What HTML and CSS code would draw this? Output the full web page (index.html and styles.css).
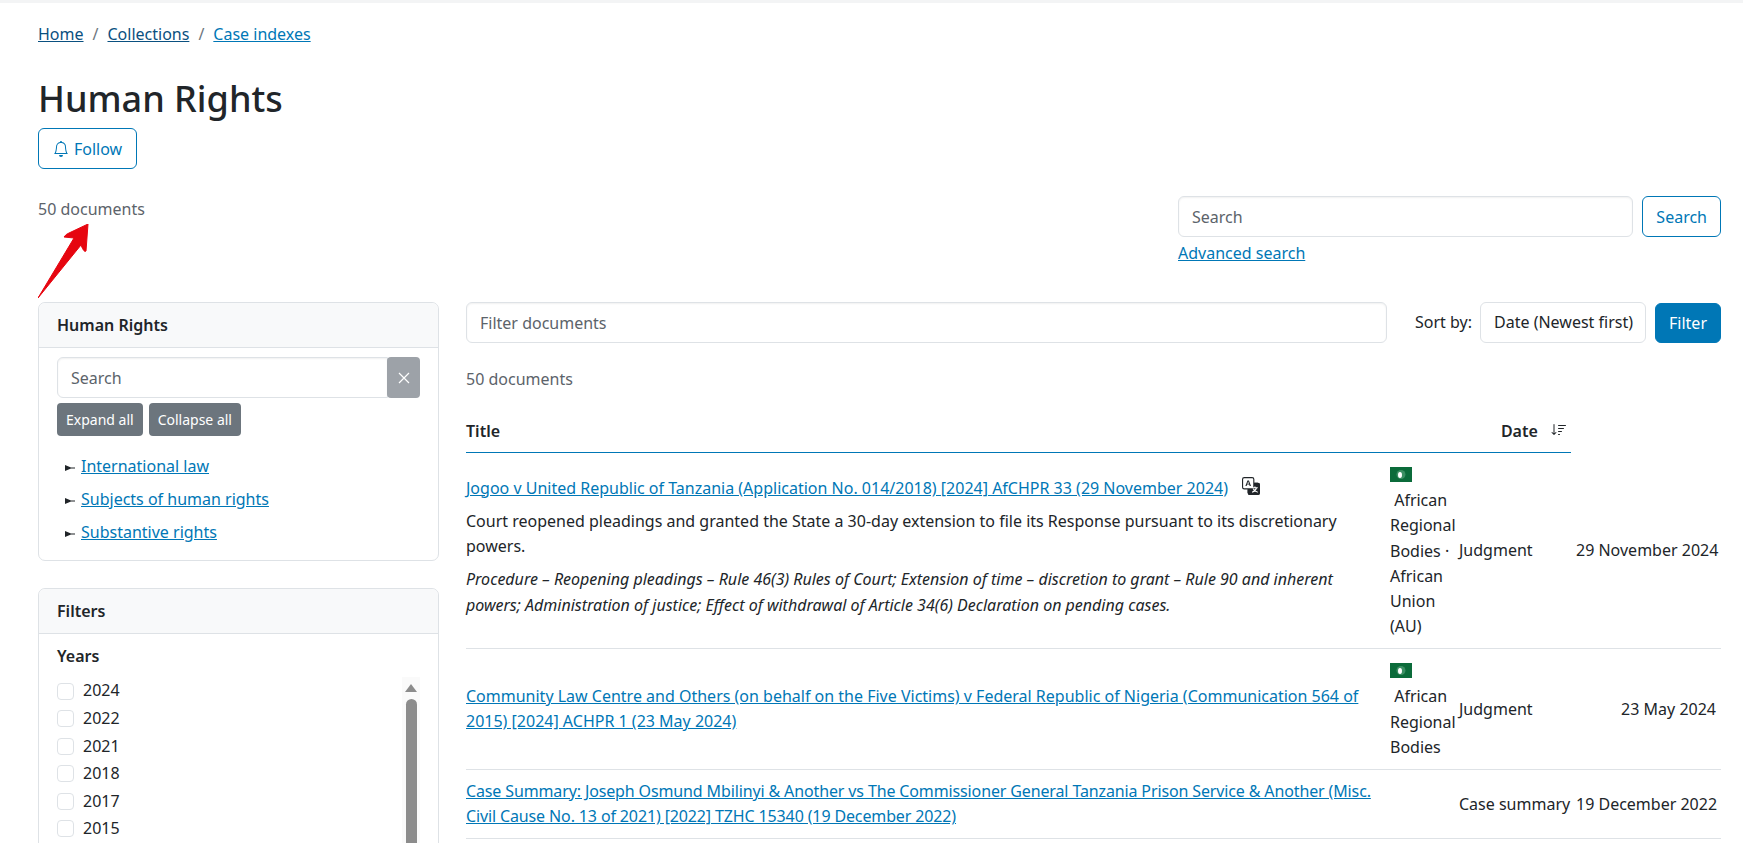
FILE: index.html
```html
<!DOCTYPE html>
<html lang="en">
<head>
    <meta charset="UTF-8">
    <title>Human Rights</title>
    <link rel="stylesheet" href="styles.css">
</head>
<body>
    <div class="top-shadow"></div>

    <main class="page">
        <!-- Breadcrumbs -->
        <nav class="crumbs">
            <a class="seen" href="#">Home</a><span class="sep">/</span><a class="seen" href="#">Collections</a><span class="sep">/</span><a href="#">Case indexes</a>
        </nav>

        <h1>Human Rights</h1>
        <button class="btn btn-outline follow">
            <svg class="bell" viewBox="0 0 16 16" fill="currentColor"><path d="M8 16a2 2 0 0 0 2-2H6a2 2 0 0 0 2 2M8 1.918l-.797.161A4 4 0 0 0 4 6c0 .628-.134 2.197-.459 3.742-.16.767-.376 1.566-.663 2.258h10.244c-.287-.692-.502-1.49-.663-2.258C12.134 8.197 12 6.628 12 6a4 4 0 0 0-3.203-3.92zM14.22 12c.223.447.481.801.78 1H1c.299-.199.557-.553.78-1C2.68 10.2 3 6.88 3 6c0-2.42 1.72-4.44 4.005-4.901a1 1 0 1 1 1.99 0A5 5 0 0 1 13 6c0 .88.32 4.2 1.22 6"/></svg>
            Follow
        </button>

        <!-- Count and site search -->
        <div class="count-row">
            <div class="count">50 documents</div>
            <div class="site-search">
                <div class="site-search-line">
                    <input class="field" type="text" placeholder="Search">
                    <button class="btn btn-outline">Search</button>
                </div>
                <a href="#">Advanced search</a>
            </div>
            <svg class="arrow" viewBox="0 0 52 76"><path d="M0 74 L36 14 L26 13 Q28 10 31 9 L50 0 L48 27 Q46 29 43 21 Z" fill="#e60610" stroke="#e60610" stroke-linejoin="round"/></svg>
        </div>

        <div class="columns">
            <!-- Sidebar -->
            <aside class="sidebar">
                <section class="card">
                    <div class="card-head">Human Rights</div>
                    <div class="card-body tree">
                        <div class="tree-search">
                            <input class="field" type="text" placeholder="Search">
                            <button class="clear">
                                <svg viewBox="0 0 16 16" width="16" height="16" stroke="#fff" stroke-width="1.2"><path d="M3 3 13 13M13 3 3 13"/></svg>
                            </button>
                        </div>
                        <div class="tree-btns">
                            <button class="btn-grey">Expand all</button>
                            <button class="btn-grey">Collapse all</button>
                        </div>
                        <ul class="tree-list">
                            <li><svg class="pointer" viewBox="0 0 10 6"><path d="M0 0 6 2.400H10V3.600H6L0 6Z" fill="#212529"/></svg><a href="#">International law</a></li>
                            <li><svg class="pointer" viewBox="0 0 10 6"><path d="M0 0 6 2.400H10V3.600H6L0 6Z" fill="#212529"/></svg><a href="#">Subjects of human rights</a></li>
                            <li><svg class="pointer" viewBox="0 0 10 6"><path d="M0 0 6 2.400H10V3.600H6L0 6Z" fill="#212529"/></svg><a href="#">Substantive rights</a></li>
                        </ul>
                    </div>
                </section>

                <section class="card">
                    <div class="card-head">Filters</div>
                    <div class="card-body filters">
                        <div class="filter-title">Years</div>
                        <div class="years">
                            <div class="year-list">
                                <label><input type="checkbox"> 2024</label>
                                <label><input type="checkbox"> 2022</label>
                                <label><input type="checkbox"> 2021</label>
                                <label><input type="checkbox"> 2018</label>
                                <label><input type="checkbox"> 2017</label>
                                <label><input type="checkbox"> 2015</label>
                            </div>
                            <div class="scroll">
                                <span class="scroll-up"></span>
                                <span class="scroll-thumb"></span>
                            </div>
                        </div>
                    </div>
                </section>
            </aside>

            <!-- Documents -->
            <section class="docs">
                <div class="filter-bar">
                    <input class="field grow" type="text" placeholder="Filter documents">
                    <span class="sort-label">Sort by:</span>
                    <div class="field select">Date (Newest first)</div>
                    <button class="btn btn-solid">Filter</button>
                </div>
                <div class="count docs-count">50 documents</div>

                <table class="doc-table">
                    <colgroup>
                        <col class="col-title"><col class="col-court"><col class="col-type"><col class="col-date">
                    </colgroup>
                    <thead>
                        <tr>
                            <th>Title</th>
                            <th colspan="2" class="th-date">Date
                                <svg class="sort" viewBox="0 0 16 16" fill="currentColor"><path d="M3.5 2.5a.5.5 0 0 0-1 0v8.793l-1.146-1.147a.5.5 0 0 0-.708.708l2 1.999.007.007a.497.497 0 0 0 .7-.006l2-2a.5.5 0 0 0-.707-.708L3.5 11.293zm3.5 1a.5.5 0 0 1 .5-.5h7a.5.5 0 0 1 0 1h-7a.5.5 0 0 1-.5-.5M7.5 6a.5.5 0 0 0 0 1h5a.5.5 0 0 0 0-1zm0 3a.5.5 0 0 0 0 1h3a.5.5 0 0 0 0-1zm0 3a.5.5 0 0 0 0 1h1a.5.5 0 0 0 0-1z"/></svg>
                            </th>
                            <th class="th-empty"></th>
                        </tr>
                    </thead>
                    <tbody>
                        <tr>
                            <td>
                                <a href="#">Jogoo v United Republic of Tanzania (Application No. 014/2018) [2024] AfCHPR 33 (29 November 2024)</a>
                                <svg class="translate" viewBox="0 0 16 16"><path fill="#212529" d="M0 2a2 2 0 0 1 2-2h7a2 2 0 0 1 2 2v3h3a2 2 0 0 1 2 2v7a2 2 0 0 1-2 2H7a2 2 0 0 1-2-2v-3H2a2 2 0 0 1-2-2zm2-1a1 1 0 0 0-1 1v7a1 1 0 0 0 1 1h7a1 1 0 0 0 1-1V2a1 1 0 0 0-1-1z"/><path fill="#212529" d="M7 5h7a2 2 0 0 1 2 2v7a2 2 0 0 1-2 2H7a2 2 0 0 1-2-2v-3h4a2 2 0 0 0 2-2V5z"/><path fill="#212529" d="M4.545 6.714 4.11 8H3l1.862-5h1.284L8 8H6.833l-.435-1.286zm1.634-.736L5.5 3.956h-.049l-.679 2.022z"/><path stroke="#fff" stroke-width="1" fill="none" d="M9 9.5h5M11.5 8.5v1M13 9.5c-.6 2-2 3.4-4 4M10 10.500c.7 1.500 2 2.600 4 3"/></svg>
                                <p>Court reopened pleadings and granted the State a 30-day extension to file its Response pursuant to its discretionary powers.</p>
                                <p class="flynote">Procedure – Reopening pleadings – Rule 46(3) Rules of Court; Extension of time – discretion to grant – Rule 90 and inherent powers; Administration of justice; Effect of withdrawal of Article 34(6) Declaration on pending cases.</p>
                            </td>
                            <td>
                                <svg class="flag" viewBox="0 0 22 15"><rect width="22" height="15" fill="#0b6b3a"/><circle cx="11" cy="7.500" r="4.500" fill="#3b8f63"/><ellipse cx="10" cy="8" rx="2" ry="3" fill="#fff"/></svg>
                                <div class="court">&nbsp;African Regional Bodies&nbsp;· African Union (AU)</div>
                            </td>
                            <td>Judgment</td>
                            <td class="date">29 November 2024</td>
                        </tr>
                        <tr>
                            <td>
                                <a href="#">Community Law Centre and Others (on behalf on the Five Victims) v Federal Republic of Nigeria (Communication 564 of 2015) [2024] ACHPR 1 (23 May 2024)</a>
                            </td>
                            <td>
                                <svg class="flag" viewBox="0 0 22 15"><rect width="22" height="15" fill="#0b6b3a"/><circle cx="11" cy="7.500" r="4.500" fill="#3b8f63"/><ellipse cx="10" cy="8" rx="2" ry="3" fill="#fff"/></svg>
                                <div class="court">&nbsp;African Regional Bodies</div>
                            </td>
                            <td>Judgment</td>
                            <td class="date">23 May 2024</td>
                        </tr>
                        <tr>
                            <td>
                                <a class="tight" href="#">Case Summary: Joseph Osmund Mbilinyi &amp; Another vs The Commissioner General Tanzania Prison Service &amp; Another (Misc. Civil Cause No. 13 of 2021) [2022] TZHC 15340 (19 December 2022)</a>
                            </td>
                            <td></td>
                            <td class="type">Case summary</td>
                            <td class="date">19 December 2022</td>
                        </tr>
                    </tbody>
                </table>
            </section>
        </div>
    </main>
</body>
</html>
```

FILE: styles.css
```css
/* Basic Styles */
html, body {
    height: 843px;
    overflow: hidden;
}

body {
    margin: 0;
    font-family: "Noto Sans", sans-serif;
    font-size: 16px;
    line-height: 25.2px;
    color: #212529;
    background-color: #fff;
}

a {
    color: #0077b6;
}

a.seen {
    color: #0a5080;
}

a.tight {
    letter-spacing: -0.13px;
}

.top-shadow {
    height: 3px;
    background-color: #f3f4f5;
}

.page {
    box-sizing: border-box;
    height: 840px;
    overflow: hidden;
    padding: 19px 22px 0 38px;
}

/* Header */
.crumbs {
    height: 25px;
}

.crumbs .sep {
    margin: 0 9px;
    color: #6c757d;
}

h1 {
    margin: 30px 0 8px;
    font-size: 36px;
    line-height: 43px;
    font-weight: 500;
}

.btn {
    font-family: inherit;
    font-size: 16px;
    line-height: 24px;
    padding: 7px 13px;
    border-radius: 6px;
    cursor: pointer;
}

.btn-outline {
    background-color: #fff;
    color: #0077b6;
    border: 1px solid #0077b6;
}

.btn-solid {
    background-color: #0077b6;
    color: #fff;
    border: 1px solid #0077b6;
}

.follow {
    display: flex;
    align-items: center;
    gap: 5px;
    height: 41px;
    padding: 0 14px;
}

.bell {
    width: 16px;
    height: 16px;
}

.count-row {
    position: relative;
    display: flex;
    justify-content: space-between;
    align-items: flex-start;
    margin-top: 28px;
    height: 105px;
}

.count {
    color: #5c636a;
}

.arrow {
    position: absolute;
    left: 0;
    top: 27px;
    width: 52px;
    height: 76px;
}

.site-search {
    width: 543px;
    margin-top: -1px;
}

.site-search-line {
    display: flex;
    gap: 9px;
    margin-bottom: 4px;
}

.field {
    box-sizing: border-box;
    height: 41px;
    padding: 0 13px;
    border: 1px solid #dee2e6;
    border-radius: 6px;
    font-family: inherit;
    font-size: 16px;
    color: #212529;
    background-color: #fff;
    box-shadow: inset 0 1px 2px rgba(0, 0, 0, 0.06);
    min-width: 0;
    flex: 1;
}

.field::placeholder {
    color: #5c636a;
    opacity: 1;
}

/* Columns */
.columns {
    display: grid;
    grid-template-columns: 401px 1255px;
    gap: 27px;
}

.card {
    border: 1px solid #dee2e6;
    border-radius: 7px;
    margin-bottom: 27px;
}

.card-head {
    height: 44px;
    padding: 0 18px;
    line-height: 44px;
    font-weight: 600;
    background-color: #f8f9fa;
    border-bottom: 1px solid #dee2e6;
    border-radius: 7px 7px 0 0;
}

.card-body {
    padding: 9px 18px 11px;
}

.tree-search {
    display: flex;
}

.tree-search .field {
    border-radius: 6px 0 0 6px;
}

.clear {
    width: 33px;
    height: 41px;
    margin-left: -1px;
    padding: 0;
    border: none;
    border-radius: 4px;
    background-color: #9da2a8;
}

.clear svg {
    display: block;
    margin: auto;
}

.tree-btns {
    display: flex;
    gap: 6px;
    margin-top: 5px;
}

.btn-grey {
    height: 33px;
    padding: 0 9px;
    border: none;
    border-radius: 4px;
    background-color: #6c757d;
    color: #fff;
    font-family: inherit;
    font-size: 14px;
}

.tree-list {
    list-style: none;
    margin: 14px 0 0;
    padding: 0 0 0 8px;
}

.tree-list li {
    height: 33px;
    line-height: 33px;
}

.pointer {
    width: 10px;
    height: 6px;
    margin-right: 6px;
    vertical-align: 1px;
}

.filters {
    padding-bottom: 0;
}

.filter-title {
    font-weight: 600;
    margin: 1px 0 8px;
}

.years {
    display: flex;
    justify-content: space-between;
    height: 200px;
    overflow: hidden;
}

.year-list label {
    display: flex;
    align-items: center;
    gap: 9px;
    height: 27.6px;
}

.year-list input {
    appearance: none;
    width: 17px;
    height: 17px;
    margin: 0;
    border: 1px solid #dee2e6;
    border-radius: 4px;
    background-color: #fff;
}

.scroll {
    width: 18px;
    background-color: #fafafa;
    display: flex;
    flex-direction: column;
    align-items: center;
}

.scroll-up {
    margin-top: 7px;
    border-left: 6.500px solid transparent;
    border-right: 6.500px solid transparent;
    border-bottom: 8px solid #8c8c8c;
}

.scroll-thumb {
    width: 11px;
    height: 200px;
    margin-top: 7px;
    border-radius: 6px;
    background-color: #8c8c8c;
}

/* Documents */
.filter-bar {
    display: flex;
    align-items: center;
}

.sort-label {
    margin: 0 8px 0 28px;
}

.filter-bar .select {
    flex: none;
    width: 166px;
    line-height: 39px;
    white-space: nowrap;
    margin-right: 9px;
    box-shadow: none;
}

.docs-count {
    margin-top: 24px;
}

.doc-table {
    width: 1255px;
    margin-top: 18px;
    table-layout: fixed;
    border-collapse: collapse;
}

.col-title { width: 919px; }
.col-court { width: 69px; }
.col-type { width: 117px; }
.col-date { width: 150px; }

.doc-table th {
    height: 42px;
    padding: 0;
    text-align: left;
    font-weight: 600;
    border-bottom: 1px solid #0077b6;
}

.doc-table th.th-date {
    text-align: right;
    padding-right: 4px;
}

.doc-table th.th-empty {
    border-bottom: none;
}

.sort {
    width: 16px;
    height: 16px;
    margin-left: 9px;
    vertical-align: -1px;
}

.doc-table td {
    padding: 9px 5px;
    vertical-align: middle;
    border-bottom: 1px solid #dee2e6;
}

.doc-table td:first-child {
    padding-left: 0;
}

.doc-table td.date,
.doc-table td.type {
    white-space: nowrap;
}

.doc-table td.date {
    text-align: right;
}

.doc-table p {
    margin: 8px 0;
}

.flynote {
    font-style: italic;
}

.translate {
    width: 18px;
    height: 18px;
    margin-left: 10px;
    vertical-align: -1px;
}

.flag {
    display: block;
    width: 22px;
    height: 15px;
    margin: 5px 0 6px;
}
```
